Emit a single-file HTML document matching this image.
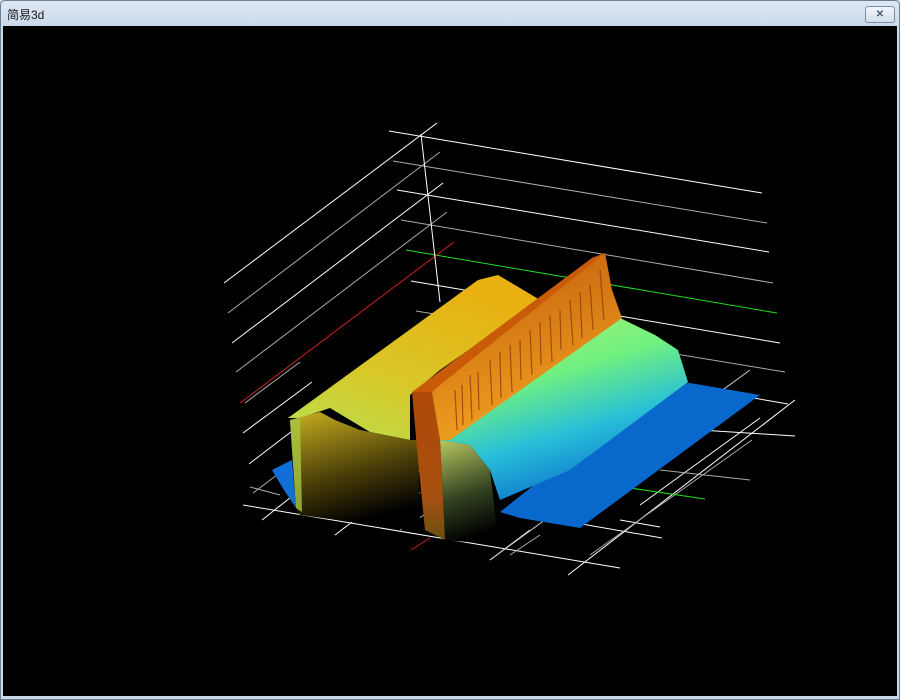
<!DOCTYPE html>
<html><head><meta charset="utf-8"><style>
html,body{margin:0;padding:0;width:900px;height:700px;overflow:hidden;background:#cfdcea}
.win{position:absolute;left:0;top:0;width:898px;height:698px;border:1px solid #6e7f92;border-radius:5px 5px 0 0;background:linear-gradient(#dfe9f5,#c9d8ea 26px,#c9d8ea)}
.title{position:absolute;left:6px;top:5px;font:12px "Liberation Sans","Noto Sans CJK SC",sans-serif;color:#1a1a1a}
.btn{position:absolute;left:864px;top:5px;width:28px;height:15px;border:1px solid #7d8fa3;border-radius:3px;background:linear-gradient(#f2f6fb,#d4dfec);font:bold 10px "Liberation Sans",sans-serif;color:#4a5a6c;text-align:center;line-height:15px}
svg{position:absolute;left:3px;top:26px}
</style></head><body>
<div class="win"><div class="title">简易3d</div><div class="btn">✕</div></div>
<svg width="894" height="670" viewBox="3 26 894 670">
<defs>
<linearGradient id="yel" x1="0" y1="1" x2="0.6" y2="0"><stop offset="0" stop-color="#b8e050"/><stop offset=".45" stop-color="#d8c828"/><stop offset="1" stop-color="#e8b010"/></linearGradient>
<linearGradient id="dark" x1="0" y1="0" x2="0.3" y2="1"><stop offset="0" stop-color="#c9b020"/><stop offset=".6" stop-color="#4a3e08"/><stop offset="1" stop-color="#000"/></linearGradient>
<linearGradient id="org" x1="0" y1="0" x2="0" y2="1"><stop offset="0" stop-color="#b04808"/><stop offset=".7" stop-color="#a85010"/><stop offset="1" stop-color="#6a5010"/></linearGradient>
<linearGradient id="tex" x1="0" y1="0" x2="0.3" y2="1"><stop offset="0" stop-color="#c05a0c"/><stop offset="1" stop-color="#f0a020"/></linearGradient>
<linearGradient id="slope" x1="0.2" y1="0" x2="0.6" y2="1"><stop offset="0" stop-color="#a8f070"/><stop offset=".35" stop-color="#70f080"/><stop offset=".65" stop-color="#28c0d8"/><stop offset="1" stop-color="#0868cc"/></linearGradient>
<linearGradient id="dark2" x1="0" y1="0" x2="0.2" y2="1"><stop offset="0" stop-color="#b8c860"/><stop offset=".6" stop-color="#304020"/><stop offset="1" stop-color="#000"/></linearGradient>
</defs>
<rect x="3" y="26" width="894" height="670" fill="#000"/>
<g stroke-width="1" fill="none">
<g stroke="#fff"><line x1="389" y1="131" x2="762" y2="193"/><line x1="397" y1="190" x2="769" y2="252"/><line x1="411" y1="281" x2="780" y2="343"/><line x1="420" y1="340" x2="788" y2="404"/></g>
<g stroke="#aaa"><line x1="393" y1="161" x2="767" y2="223"/><line x1="401" y1="220" x2="773" y2="283"/><line x1="416" y1="311" x2="785" y2="372"/></g>
<line x1="406" y1="250" x2="777" y2="313" stroke="#2d2"/>
<g stroke="#fff"><line x1="224" y1="283" x2="437" y2="123"/><line x1="232" y1="343" x2="443" y2="183"/><line x1="243" y1="433" x2="312" y2="382"/><line x1="249" y1="464" x2="300" y2="425"/></g>
<g stroke="#aaa"><line x1="228" y1="313" x2="440" y2="152"/><line x1="236" y1="372" x2="447" y2="212"/><line x1="245" y1="403" x2="300" y2="362"/><line x1="253" y1="493" x2="290" y2="465"/></g>
<line x1="240" y1="403" x2="454" y2="242" stroke="#c22"/>
<line x1="411" y1="550" x2="430" y2="538" stroke="#c22"/>
<line x1="421" y1="134" x2="440" y2="302" stroke="#fff"/>
<g stroke="#fff"><line x1="243" y1="505" x2="620" y2="568"/><line x1="335" y1="535" x2="420" y2="470"/><line x1="490" y1="560" x2="530" y2="530"/><line x1="568" y1="575" x2="795" y2="400"/><line x1="262" y1="520" x2="300" y2="490"/><line x1="620" y1="520" x2="660" y2="527"/><line x1="700" y1="430" x2="795" y2="436"/><line x1="360" y1="483" x2="420" y2="493"/><line x1="530" y1="515" x2="662" y2="538"/><line x1="490" y1="560" x2="750" y2="370" stroke="#ccc"/><line x1="640" y1="505" x2="760" y2="418"/></g>
<g stroke="#aaa"><line x1="250" y1="487" x2="280" y2="495"/><line x1="320" y1="500" x2="420" y2="517"/><line x1="400" y1="530" x2="440" y2="505"/><line x1="590" y1="555" x2="752" y2="440"/><line x1="660" y1="470" x2="750" y2="480"/><line x1="510" y1="555" x2="540" y2="535"/></g>
<line x1="610" y1="485" x2="705" y2="499" stroke="#2d2"/>
</g>
<polygon points="272,470 292,460 296,508 284,490" fill="#1070d8"/>
<polygon points="288,418 478,280 498,275 515,285 540,300 440,370 410,395 410,440 370,432 330,408 300,418" fill="url(#yel)"/>
<polygon points="290,420 320,412 335,420 360,430 410,440 418,440 420,520 410,530 300,515 296,508" fill="url(#dark)"/>
<polygon points="290,420 300,418 302,512 296,508" fill="#a8c840" opacity=".8"/>
<polygon points="660,385 690,383 760,395 580,528 520,518 500,512" fill="#0868cc"/>
<polygon points="440,440 620,318 655,335 678,350 688,382 570,470 500,500 490,470 470,445" fill="url(#slope)"/>
<polygon points="440,440 470,445 490,470 496,520 500,545 445,540" fill="url(#dark2)"/>
<polygon points="430,392 592,258 605,253 612,290 622,318 450,440 440,440" fill="url(#tex)"/>
<g stroke="#8a3a05" stroke-width="1.2" opacity=".75">
<line x1="455" y1="390" x2="457" y2="430"/><line x1="462" y1="385" x2="463" y2="425"/><line x1="470" y1="375" x2="472" y2="420"/><line x1="478" y1="372" x2="479" y2="410"/><line x1="490" y1="360" x2="492" y2="405"/><line x1="500" y1="352" x2="501" y2="398"/><line x1="510" y1="345" x2="512" y2="392"/><line x1="520" y1="340" x2="521" y2="380"/><line x1="530" y1="330" x2="532" y2="375"/><line x1="540" y1="322" x2="541" y2="365"/><line x1="550" y1="315" x2="552" y2="362"/><line x1="560" y1="310" x2="561" y2="350"/><line x1="570" y1="300" x2="573" y2="345"/><line x1="580" y1="292" x2="582" y2="338"/><line x1="590" y1="285" x2="593" y2="330"/><line x1="600" y1="270" x2="604" y2="320"/></g>
<polygon points="412,392 592,258 605,253 440,385 432,392" fill="#c85a08"/>
<polygon points="412,392 432,392 440,440 445,540 425,530 418,460" fill="url(#org)"/>
</svg>
</body></html>
